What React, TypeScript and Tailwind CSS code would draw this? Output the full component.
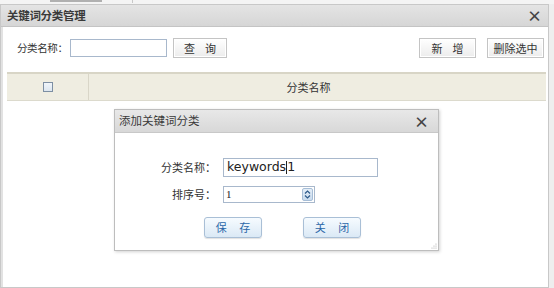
import React from "react";

const F = { fontFamily: '"Noto Sans CJK SC", "Noto Sans", sans-serif' };

function GrayBtn({ children, w }: { children: React.ReactNode; w: string }) {
  return (
    <div
      className={`${w} h-[20px] flex items-center justify-center whitespace-nowrap border border-[#c4c4c4] bg-gradient-to-b from-white to-[#ececec] text-[11px] text-[#333] shadow-[inset_0_0_0_1px_#fff]`}
    >
      {children}
    </div>
  );
}

function BlueBtn({ children }: { children: React.ReactNode }) {
  return (
    <div className="w-[58px] h-[21px] flex items-center justify-center whitespace-nowrap rounded-[3px] border border-[#a9bfd6] bg-gradient-to-b from-[#f6fbff] to-[#dbe9f5] text-[11px] text-[#2a67a8] shadow-[0_1px_1px_rgba(0,0,0,0.12)]">
      {children}
    </div>
  );
}

export default function App() {
  return (
    <div className="w-[554px] h-[288px] relative overflow-hidden bg-[#eeeeee]" style={F}>
      {/* background strip */}
      <div className="h-[4px] bg-[#f4f4f4] flex items-start">
        <div className="ml-[50px] w-[52px] h-[2px] bg-[#b0b0b0]" />
        <div className="ml-[30px] w-[1px] h-[3px] bg-[#c8c8c8]" />
      </div>
      <div className="w-[549px] h-[284px] border border-[#c8c8c8] bg-white flex flex-col">
        {/* title */}
        <div className="h-[22px] flex items-center justify-between px-[6px] bg-gradient-to-b from-[#e4e4e4] to-[#d6d6d6] border-b border-[#c4c4c4]">
          <span className="text-[11.5px] font-bold text-[#3a3a3a] tracking-[-0.3px]">关键词分类管理</span>
          <span className="text-[15px] font-bold text-[#444] leading-none">×</span>
        </div>
        <div className="flex-1 border-l-[2px] border-[#e2e2e2] flex flex-col">
          {/* toolbar */}
          <div className="h-[42px] flex items-center pl-[14px] pr-[4px]">
            <span className="text-[10.5px] text-[#333] w-[53px] whitespace-nowrap tracking-[-0.4px]">分类名称：</span>
            <div className="w-[97px] h-[18px] border border-[#a8b8cc] bg-white" />
            <div className="ml-[6px]">
              <GrayBtn w="w-[54px]">查&nbsp;&nbsp;&nbsp;&nbsp;询</GrayBtn>
            </div>
            <div className="flex-1" />
            <GrayBtn w="w-[57px]">新&nbsp;&nbsp;&nbsp;&nbsp;增</GrayBtn>
            <div className="ml-[11px]">
              <GrayBtn w="w-[57px]">删除选中</GrayBtn>
            </div>
          </div>
          {/* table header */}
          <div className="ml-[4px] mr-[2px] mt-[3px] h-[29px] flex border-t-2 border-[#d8d5c6] border-b border-b-[#dcdacd] bg-[#efede1]">
            <div className="w-[82px] flex items-center justify-center border-r border-[#d9d6c8]">
              <div className="w-[10px] h-[10px] border border-[#7d8fa3] bg-gradient-to-b from-[#f0f5fa] to-[#dde6ef]" />
            </div>
            <div className="flex-1 flex items-center justify-center text-[11px] text-[#333] pr-[18px]">分类名称</div>
          </div>
        </div>
      </div>

      {/* inner dialog */}
      <div className="absolute left-[114px] top-[109px] w-[325px] h-[142px] border border-[#bdbdbd] bg-white shadow-[1px_1px_3px_rgba(0,0,0,0.18)] flex flex-col">
        <div className="h-[23px] flex items-center justify-between pl-[4px] pr-[9px] bg-gradient-to-b from-[#e8e8e8] to-[#d8d8d8] border-b border-[#c8c8c8]">
          <span className="text-[11.5px] text-[#3a3a3a]">添加关键词分类</span>
          <span className="text-[15px] font-bold text-[#444] leading-none">×</span>
        </div>
        <div className="flex-1 flex flex-col pt-[25px]">
          <div className="flex items-center h-[19px]">
            <span className="w-[102px] text-right text-[11px] text-[#333] pr-[1px] whitespace-nowrap">分类名称：</span>
            <div className="ml-[6px] w-[155px] h-[19px] border border-[#a8b8cc] bg-white flex items-center pl-[3px]">
              <span className="text-[12.5px] text-[#222] leading-none" style={{ fontFamily: '"DejaVu Sans", sans-serif' }}>keywords</span>
              <span className="inline-block w-[1px] h-[13px] bg-[#222]" />
              <span className="text-[12.5px] text-[#222] leading-none" style={{ fontFamily: '"DejaVu Sans", sans-serif' }}>1</span>
            </div>
          </div>
          <div className="flex items-center h-[17px] mt-[9px]">
            <span className="w-[102px] text-right text-[11px] text-[#333] pr-[1px] whitespace-nowrap">排序号：</span>
            <div className="ml-[6px] w-[92px] h-[17px] border border-[#a8b8cc] bg-white flex items-center pl-[2px] relative">
              <span className="text-[11px] text-[#222] leading-none" style={{ fontFamily: '"Liberation Serif", serif' }}>1</span>
              <div className="absolute right-[1px] top-[1px] w-[11px] h-[13px] rounded-[2px] bg-gradient-to-b from-[#e4eef8] to-[#c9dbee] border border-[#a6bdd6] flex flex-col items-center justify-center">
                <svg width="7" height="9" viewBox="0 0 7 9">
                  <path d="M1 3.5 L3.5 1 L6 3.5" fill="none" stroke="#2d5a8a" strokeWidth="1.2" />
                  <path d="M1 5.5 L3.5 8 L6 5.5" fill="none" stroke="#2d5a8a" strokeWidth="1.2" />
                </svg>
              </div>
            </div>
          </div>
          <div className="flex mt-[14px] pl-[89px] gap-[41px]">
            <BlueBtn>保&nbsp;&nbsp;&nbsp;&nbsp;&nbsp;存</BlueBtn>
            <BlueBtn>关&nbsp;&nbsp;&nbsp;&nbsp;&nbsp;闭</BlueBtn>
          </div>
        </div>
        <svg className="absolute right-[1px] bottom-[1px]" width="6" height="6" viewBox="0 0 6 6">
          <circle cx="5" cy="1" r="0.6" fill="#aaa" />
          <circle cx="3" cy="3" r="0.6" fill="#aaa" />
          <circle cx="5" cy="3" r="0.6" fill="#aaa" />
          <circle cx="1" cy="5" r="0.6" fill="#aaa" />
          <circle cx="3" cy="5" r="0.6" fill="#aaa" />
          <circle cx="5" cy="5" r="0.6" fill="#aaa" />
        </svg>
      </div>
    </div>
  );
}
